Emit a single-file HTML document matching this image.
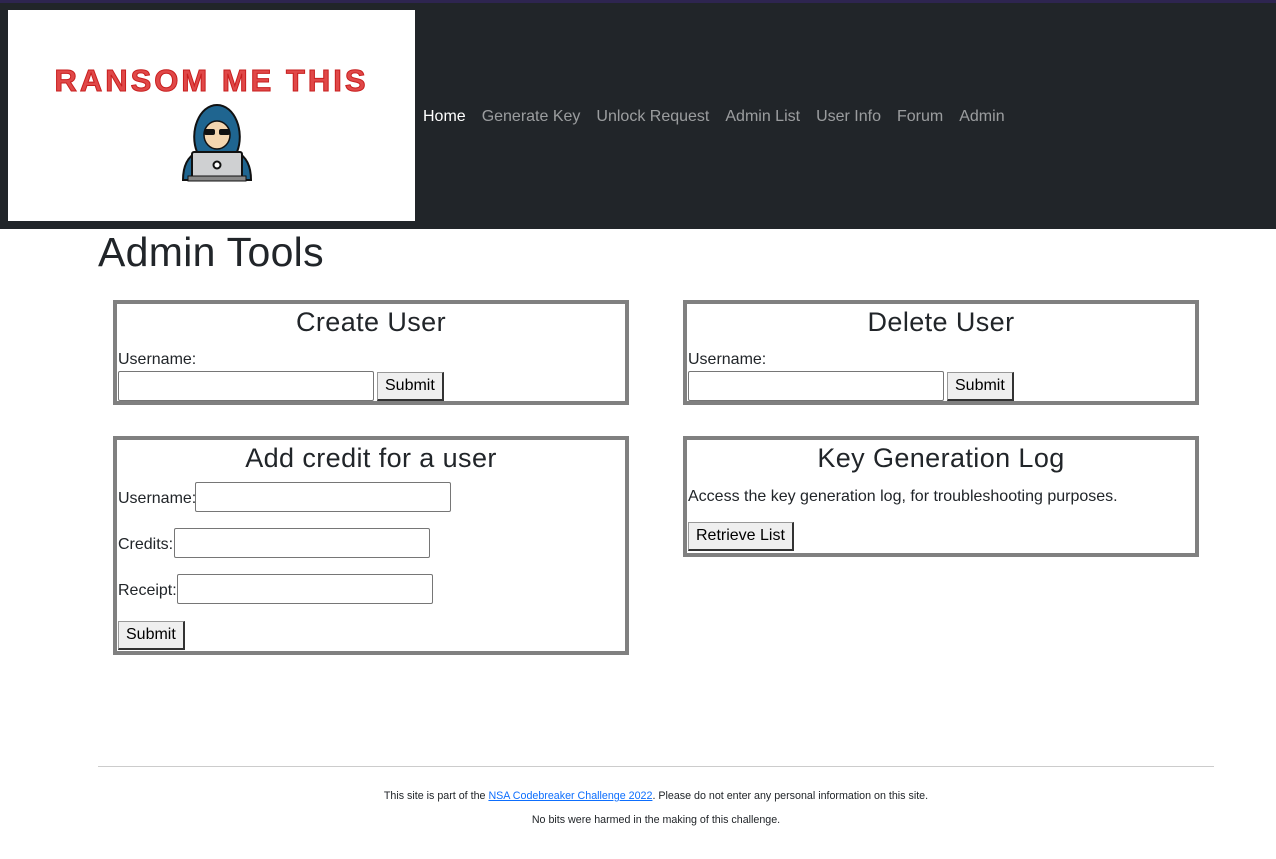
<!DOCTYPE html>
<html><head><meta charset="utf-8"><style>
*{box-sizing:border-box;margin:0;padding:0}
body{width:1276px;height:859px;position:relative;background:#fff;font-family:"Liberation Sans",sans-serif;color:#212529;overflow:hidden}
.nav{position:absolute;left:0;top:0;width:1276px;height:229px;background:#212529;border-top:3px solid #2e2550}
.logo{position:absolute;left:8px;top:7px;width:407px;height:211px;background:#fff}
.logo .t{position:absolute;left:0;width:100%;top:53px;text-align:center;font-size:31px;font-weight:bold;letter-spacing:3px;color:#e04848;-webkit-text-stroke:1px #c81e1e}
.links{position:absolute;left:423px;top:105px;font-size:16px}
.links span{color:rgba(255,255,255,.55);margin-right:16px}
.links span.a{color:#fff}
h1{position:absolute;left:98px;top:229px;font-size:41px;font-weight:500;letter-spacing:0.3px}
.box{position:absolute;border:4px solid #808080;width:516px}
.box h2{text-align:center;font-size:27px;font-weight:500;margin-top:2px;line-height:32px;letter-spacing:0.4px}
.box .c{position:absolute;left:1px;font-size:16px}
input{border:1px solid #767676;border-radius:2px;height:30px;position:absolute;background:#fff}
button{position:absolute;font:16px "Liberation Sans",sans-serif;background:#efefef;border-style:solid;border-width:1px 2px 2px 1px;border-color:#999 #333 #333 #999;height:29px;padding:0 7px;color:#000}
.hr{position:absolute;left:98px;top:766px;width:1116px;border-top:1px solid #ccc}
.f{position:absolute;left:98px;width:1116px;text-align:center;font-size:10.7px}
.f a{color:#0d6efd}
</style></head><body>
<div class="nav">
<div class="logo"><div class="t">RANSOM ME THIS</div>
<svg style="position:absolute;left:171px;top:92px" width="76" height="80" viewBox="0 0 76 80">
<path d="M4 78 C4 62 10 54 18 50 C10 30 20 3 38 3 C56 3 66 30 58 50 C66 54 72 62 72 78 Z" fill="#1f6590" stroke="#111" stroke-width="2"/>
<ellipse cx="38" cy="33" rx="13" ry="14" fill="#f4d6b0" stroke="#111" stroke-width="1.5"/>
<rect x="25" y="27" width="11" height="6" rx="2" fill="#111"/><rect x="40" y="27" width="11" height="6" rx="2" fill="#111"/>
<rect x="13" y="50" width="50" height="26" rx="2" fill="#cfd0d2" stroke="#111" stroke-width="2"/>
<circle cx="38" cy="63" r="3.5" fill="#fff" stroke="#111" stroke-width="2"/>
<rect x="9" y="74" width="58" height="5" fill="#888" stroke="#111" stroke-width="1"/>
</svg></div>
<div class="links"><span class="a">Home</span><span>Generate Key</span><span>Unlock Request</span><span>Admin List</span><span>User Info</span><span>Forum</span><span>Admin</span></div>
</div>
<h1>Admin Tools</h1>
<div class="box" style="left:113px;top:300px;height:105px"><h2>Create User</h2>
<div class="c" style="top:47px">Username:</div>
<input style="left:1px;top:67px;width:256px"><button style="left:260px;top:68px">Submit</button></div>
<div class="box" style="left:683px;top:300px;height:105px"><h2>Delete User</h2>
<div class="c" style="top:47px">Username:</div>
<input style="left:1px;top:67px;width:256px"><button style="left:260px;top:68px">Submit</button></div>
<div class="box" style="left:113px;top:436px;height:219px"><h2>Add credit for a user</h2>
<div class="c" style="top:50px">Username:</div><input style="left:78px;top:42px;width:256px">
<div class="c" style="top:96px">Credits:</div><input style="left:57px;top:88px;width:256px">
<div class="c" style="top:142px">Receipt:</div><input style="left:60px;top:134px;width:256px">
<button style="left:1px;top:181px">Submit</button></div>
<div class="box" style="left:683px;top:436px;height:121px"><h2>Key Generation Log</h2>
<div class="c" style="top:48px">Access the key generation log, for troubleshooting purposes.</div>
<button style="left:1px;top:82px">Retrieve List</button></div>
<div class="hr"></div>
<div class="f" style="top:790px">This site is part of the <a href="#">NSA Codebreaker Challenge 2022</a>. Please do not enter any personal information on this site.</div>
<div class="f" style="top:814px">No bits were harmed in the making of this challenge.</div>
</body></html>
